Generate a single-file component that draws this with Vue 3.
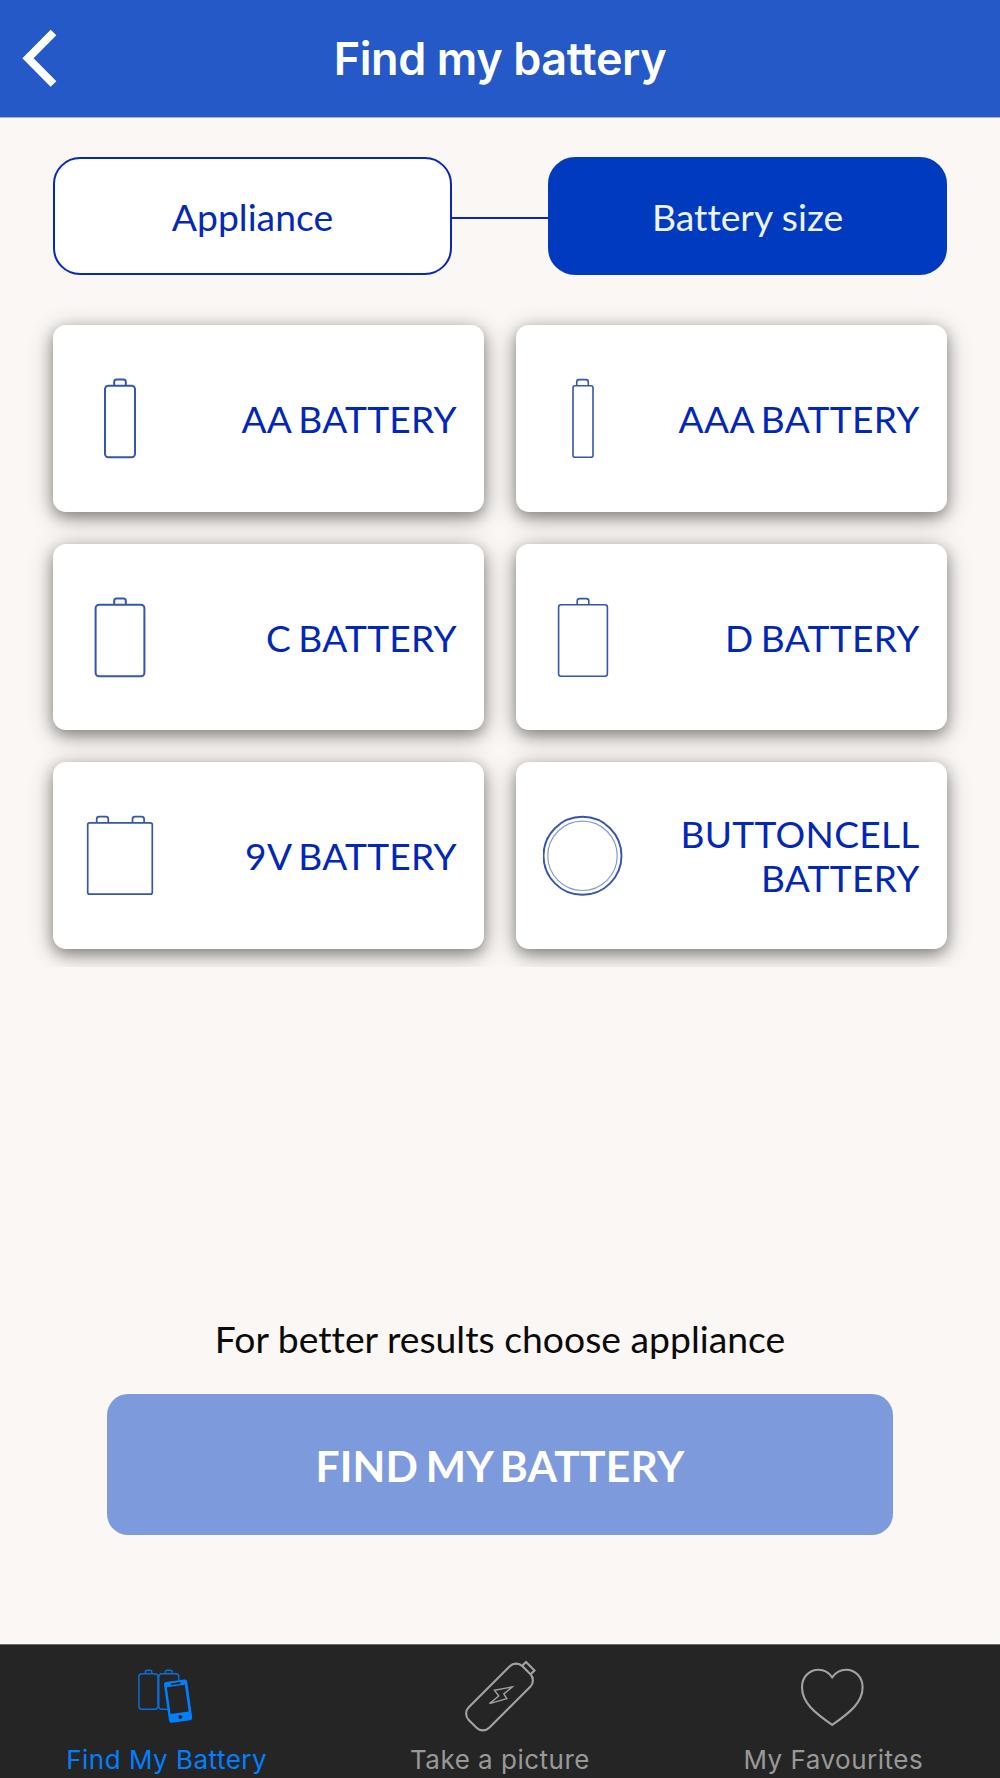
<template>
  <div class="screen">

    <header class="navbar">
      <button class="back" aria-label="Back">
        <svg width="40" height="64" viewBox="0 0 40 64">
          <path d="M33.5 5.5 L8 31.2 L33.5 57" fill="none" stroke="#fff" stroke-width="8" />
        </svg>
      </button>
      <h1 class="title">Find my battery</h1>
    </header>

    <main class="content">
      <div class="steps">
        <button class="step">Appliance</button>
        <span class="step-line"></span>
        <button class="step active">Battery size</button>
      </div>

      <div class="sizes">
        <button v-for="size in sizes" :key="size.label" class="card">
          <svg class="card-icon" width="80" height="82" viewBox="0 0 80 82">
            <template v-if="size.round">
              <circle cx="39.5" cy="41.8" r="39" stroke-width="1.9" />
              <circle cx="39.5" cy="41.8" r="34.7" stroke-width="1.2" opacity="0.6" />
            </template>
            <template v-else>
              <path v-for="x in size.caps" :key="x" :d="capPath(x)" :stroke-width="size.stroke" />
              <rect
                :x="40 - size.width / 2"
                y="8.8"
                :width="size.width"
                height="71.4"
                :rx="size.radius"
                :stroke-width="size.stroke"
              />
            </template>
          </svg>
          <span class="card-label">{{ size.label }}</span>
        </button>
      </div>

      <div class="actions">
        <p class="hint">For better results choose appliance</p>
        <button class="find">FIND MY BATTERY</button>
      </div>
    </main>

    <nav class="tabbar">
      <a class="tab active">
        <svg width="100" height="80" viewBox="0.7 -0.3 100 80">
          <g fill="none" stroke="#0a6fdc" stroke-width="1.4">
            <rect x="22.6" y="18.4" width="19" height="35.6" rx="3" />
            <path d="M29 18 V17 Q29 15 31 15 H33.5 Q35.5 15 35.5 17 V18" />
            <path d="M53 54 H45.5 Q42.5 54 42.5 51 V21.4 Q42.5 18.4 45.5 18.4 H59.5 Q62.5 18.4 62.5 21.4 V25" />
            <path d="M49 18 V17 Q49 15 51 15 H54 Q56 15 56 17 V18" />
          </g>
          <g transform="translate(61.8 45.8) rotate(-8)">
            <rect x="-11.7" y="-20.5" width="23.4" height="41" rx="2.6" fill="#0080ff" />
            <rect x="-9.2" y="-15.2" width="18.2" height="27" fill="#252525" />
            <rect x="-5" y="-18.7" width="10" height="1.9" rx="0.9" fill="#252525" />
            <circle cx="0" cy="16" r="2" fill="#252525" />
          </g>
        </svg>
        <span>Find My Battery</span>
      </a>
      <a class="tab">
        <svg width="100" height="80" viewBox="0.5 -0.3 100 80">
          <g fill="none" stroke="#a3a3a3" stroke-width="2.1">
            <g transform="translate(50 41.7) rotate(45)">
              <rect x="-14.5" y="-38" width="29" height="76" rx="9" />
              <path d="M-6 -38.5 V-43.5 H6 V-38.5" />
            </g>
            <path d="M45 35 L62.7 31.7 L54.3 38.7 L57.3 43.3 L40 48.3 L49.3 40.7 Z" stroke-width="1.4" />
          </g>
        </svg>
        <span>Take a picture</span>
      </a>
      <a class="tab">
        <svg width="100" height="80" viewBox="0 -0.3 100 80">
          <path
            d="M49.2 22 C45.5 16.8 40.5 14.5 35.5 14.5 C26 14.5 19 22 19 32 C19 47 31 57 49.2 69.6 C67.4 57 79.6 47 79.6 32 C79.6 22 72.5 14.5 63 14.5 C58 14.5 53 16.8 49.2 22 Z"
            fill="none"
            stroke="#a3a3a3"
            stroke-width="2.1"
          />
        </svg>
        <span>My Favourites</span>
      </a>
    </nav>

  </div>
</template>


<script setup>
const sizes = [
  { label: 'AA BATTERY', width: 30, radius: 3.5, stroke: 2, caps: [40] },
  { label: 'AAA BATTERY', width: 20, radius: 2, stroke: 1.6, caps: [39.5] },
  { label: 'C BATTERY', width: 48.8, radius: 3.5, stroke: 2, caps: [40] },
  { label: 'D BATTERY', width: 48.8, radius: 2.5, stroke: 1.6, caps: [40] },
  { label: '9V BATTERY', width: 64.6, radius: 2, stroke: 1.7, caps: [22.5, 58.3] },
  { label: 'BUTTONCELL BATTERY', round: true },
];

// terminal on top of the battery, centered on x
const capPath = (x) =>
  `M${x - 5.8} 8.6 V5 Q${x - 5.8} 2.6 ${x - 3.3} 2.6 H${x + 3.3} Q${x + 5.8} 2.6 ${x + 5.8} 5 V8.6`;
</script>


<style>
body {
  margin: 0;
}
</style>

<style scoped>
.screen {
  display: flex;
  flex-direction: column;
  width: 1000px;
  height: 1778px;
  overflow: hidden;
  background-color: #fbf7f4;
  font-family: Lato, sans-serif;
  font-variant-ligatures: none;
}

button {
  margin: 0;
  padding: 0;
  border: none;
  background: none;
  font: inherit;
  font-variant-ligatures: none;
}

.navbar {
  display: grid;
  grid-template-columns: 100px 1fr 100px;
  align-items: center;
  box-sizing: border-box;
  height: 118px;
  border-bottom: 1px solid #b3aeb0;
  background-color: #2459c7;
}

.back {
  display: flex;
  padding-left: 20px;
}

.title {
  margin: 0;
  text-align: center;
  white-space: nowrap;
  font: 600 45px/60px Inter, sans-serif;
  letter-spacing: -0.4px;
  color: #fff;
}

.content {
  display: flex;
  flex: 1;
  flex-direction: column;
}

.steps {
  display: flex;
  align-items: center;
  padding: 39px 53px 0 53px;
}

.step {
  box-sizing: border-box;
  width: 399px;
  height: 118px;
  padding-top: 1px;
  border: 2px solid #0629b5;
  border-radius: 27px;
  background-color: #fff;
  font-size: 37.3px;
  color: #0629b5;
}

.step.active {
  border-color: #003bbf;
  background-color: #003bbf;
  color: #eef3ff;
}

.step-line {
  flex: 1;
  height: 2px;
  margin-top: 4px;
  background-color: #0629b5;
}

/* the list cuts the shadow of its last row */
.sizes {
  display: grid;
  grid-template-columns: 1fr 1fr;
  grid-auto-rows: 186.5px;
  gap: 32px;
  overflow: hidden;
  padding: 50px 53.4px 18px;
}

.card {
  display: flex;
  align-items: center;
  justify-content: space-between;
  padding: 0 27px 0 26.5px;
  border-radius: 13px;
  background-color: #fff;
  box-shadow: 0 5px 24px rgba(0, 0, 0, 0.3), 0 5px 14px rgba(0, 0, 0, 0.3);
}

.card-icon {
  flex: none;
  fill: none;
  stroke: #3656ac;
}

.card-label {
  width: 250px;
  padding-top: 2px;
  text-align: right;
  font-size: 37.1px;
  line-height: 44px;
  letter-spacing: 0.3px;
  word-spacing: -2.5px;
  color: #0227b8;
}

.actions {
  display: flex;
  flex-direction: column;
  align-items: center;
  margin-top: auto;
  padding-bottom: 109px;
}

.hint {
  margin: 0 0 33px;
  font-size: 37.3px;
  line-height: 44px;
  color: #0a0a0a;
}

.find {
  width: 786px;
  height: 141px;
  padding-top: 1px;
  border-radius: 21px;
  background-color: #7d9bdc;
  font-size: 42.6px;
  font-weight: 700;
  letter-spacing: 0.2px;
  word-spacing: -3px;
  color: #fff;
}

.tabbar {
  display: flex;
  box-sizing: border-box;
  height: 134px;
  border-top: 1px solid #6b6a69;
  background-color: #252525;
}

.tab {
  display: flex;
  flex: 1;
  flex-direction: column;
  align-items: center;
  padding-top: 10px;
  white-space: nowrap;
  font: 400 26px/32px Inter, sans-serif;
  letter-spacing: 0.5px;
  color: #999;
}

.tab svg {
  flex: none;
}

.tab span {
  margin-top: 9px;
}

.tab.active {
  color: #0080ff;
}
</style>
